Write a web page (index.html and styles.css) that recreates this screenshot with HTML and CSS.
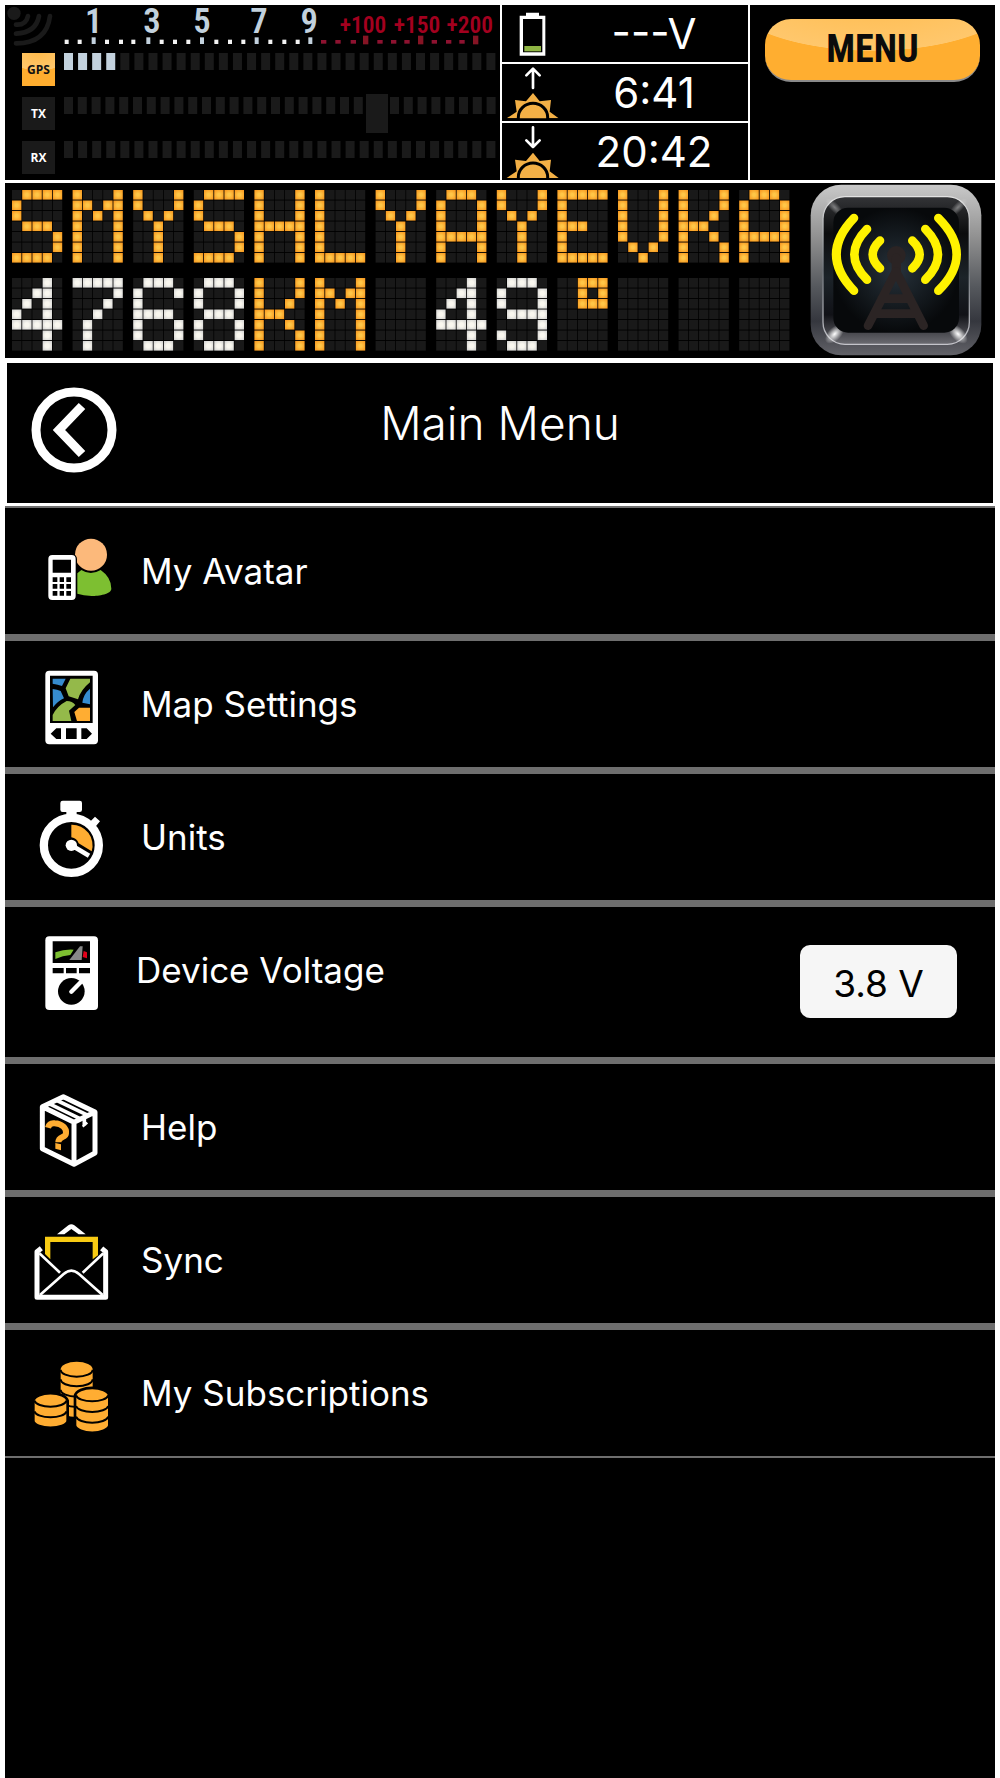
FILE: index.html
```
<!DOCTYPE html>
<html lang="en">
<head>
<meta charset="utf-8">
<meta name="viewport" content="width=device-width, initial-scale=1">
<title>Main Menu</title>
<link rel="stylesheet" href="styles.css">
</head>
<body>
<div class="screen">
  <section class="status">
    <div class="meters">
      <svg class="scale" viewBox="15 15 1485 129" role="img" aria-label="Signal scale">
        <g fill="none" stroke="#1a1a1a" stroke-width="14" stroke-linecap="round">
          <circle cx="42" cy="40" r="20" fill="#1a1a1a" stroke="none"/>
          <path d="M48 74Q78 76 84 48M48 101Q108 98 117 48M48 130Q140 130 150 48"/>
        </g>
        <g class="scale-low">
          <text x="281" y="100">1</text><text x="456" y="100">3</text><text x="606" y="100">5</text><text x="777" y="100">7</text><text x="928" y="100">9</text>
        </g>
        <g class="scale-high">
          <text x="1089" y="98">+100</text><text x="1251" y="98">+150</text><text x="1409" y="98">+200</text>
        </g>
        <g class="ticks"></g>
      </svg>
      <div class="meter"><span class="badge badge-on">GPS</span><svg class="bars" viewBox="0 0 432 39" data-lit="4"></svg></div>
      <div class="meter"><span class="badge">TX</span><svg class="bars" viewBox="0 0 432 39" data-knob="302"></svg></div>
      <div class="meter"><span class="badge">RX</span><svg class="bars" viewBox="0 0 432 39"></svg></div>
    </div>
    <div class="readings">
      <div class="reading">
        <svg class="reading-icon" viewBox="18 15 162 171" aria-hidden="true">
          <path fill="#fff" fill-rule="evenodd" d="M78 38H117V47H136V167H59V47H78ZM69 57V157H127V57Z"/>
          <path fill="#8fb544" d="M73 138H123V154H73Z"/>
        </svg>
        <span class="value">---V</span>
      </div>
      <div class="reading">
        <svg class="reading-icon" viewBox="18 192 162 171" aria-label="Sunrise" role="img">
          <path fill="none" stroke="#fff" stroke-width="8" stroke-linecap="round" stroke-linejoin="round" d="M99 264V207M79 226L99 206L119 226"/>
          <path fill="#f3b046" d="M20 355L50 335L45 300L78 304L99 279L119 304L153 300L149 335L176 355Z"/>
          <path fill="#f3b046" stroke="#000" stroke-width="9" d="M55 360V352A44 42 0 0 1 143 352V360"/>
          <path d="M18 355H180V363H18Z"/>
        </svg>
        <span class="value">6:41</span>
      </div>
      <div class="reading">
        <svg class="reading-icon" viewBox="18 190 162 171" aria-label="Sunset" role="img">
          <path fill="none" stroke="#fff" stroke-width="8" stroke-linecap="round" stroke-linejoin="round" d="M99 203V262M79 242L99 262L119 242"/>
          <path fill="#f3b046" d="M20 355L50 335L45 300L78 304L99 279L119 304L153 300L149 335L176 355Z"/>
          <path fill="#f3b046" stroke="#000" stroke-width="9" d="M55 360V352A44 42 0 0 1 143 352V360"/>
          <path d="M18 355H180V363H18Z"/>
        </svg>
        <span class="value">20:42</span>
      </div>
    </div>
    <div class="menu-cell"><button class="menu-button" type="button">MENU</button></div>
  </section>

  <section class="board">
    <div class="led">
      <svg class="led-line" viewBox="0 0 778 73" role="img" aria-label="SMYSHLYAYEVKA"></svg>
      <svg class="led-line" viewBox="0 0 778 73" role="img" aria-label="4768KM 49°"></svg>
    </div>
    <svg class="antenna" viewBox="30 28 516 516" role="img" aria-label="Transmit">
      <defs>
        <linearGradient id="rim" x1="0" y1="0" x2="0" y2="1"><stop offset="0" stop-color="#c9c9c9"/><stop offset=".3" stop-color="#929292"/><stop offset=".6" stop-color="#55585d"/><stop offset=".8" stop-color="#35373e"/><stop offset="1" stop-color="#626268"/></linearGradient>
        <linearGradient id="bevel" x1="0" y1="0" x2="0" y2="1"><stop offset="0" stop-color="#333437"/><stop offset=".25" stop-color="#0b0c0d"/><stop offset=".55" stop-color="#1c2329"/><stop offset=".8" stop-color="#111217"/><stop offset="1" stop-color="#6c6c72"/></linearGradient>
        <linearGradient id="edge" x1="0" y1="0" x2="0" y2="1"><stop offset="0" stop-color="#e2e2e2"/><stop offset=".5" stop-color="#6f747a"/><stop offset="1" stop-color="#c4c4ca"/></linearGradient>
        <radialGradient id="glass"><stop offset="0" stop-color="#27323b"/><stop offset="1" stop-color="#07090b"/></radialGradient>
        <radialGradient id="glint"><stop offset="0" stop-color="#fff"/><stop offset="1" stop-color="#fff" stop-opacity="0"/></radialGradient>
      </defs>
      <rect x="32" y="30" width="512" height="512" rx="92" fill="url(#rim)"/>
      <rect x="69" y="66" width="439" height="443" rx="66" fill="url(#bevel)" stroke="url(#edge)" stroke-width="4"/>
      <ellipse cx="104" cy="478" rx="36" ry="20" transform="rotate(-45 104 478)" fill="url(#glint)"/>
      <ellipse cx="474" cy="478" rx="36" ry="20" transform="rotate(45 474 478)" fill="url(#glint)"/>
      <ellipse cx="104" cy="98" rx="36" ry="14" transform="rotate(45 104 98)" fill="url(#glint)" opacity=".4"/>
      <ellipse cx="474" cy="98" rx="36" ry="14" transform="rotate(-45 474 98)" fill="url(#glint)" opacity=".4"/>
      <rect x="100" y="99" width="377" height="375" rx="44" fill="url(#glass)"/>
      <g fill="none" stroke="#2b2424" stroke-linecap="round" stroke-linejoin="round">
        <circle cx="289" cy="242" r="28" fill="#2b2424" stroke="none"/>
        <path stroke-width="28" d="M289 250V290"/>
        <path stroke-width="26" d="M204 453L288 290L371 453M245 372H330M228 417H347"/>
      </g>
      <g fill="none" stroke="#fff200" stroke-width="26" stroke-linecap="round">
        <path d="M162 130Q56 240 162 348M201 163Q125 240 201 315M240 198Q196 240 240 281"/>
        <path d="M415 130Q525 240 415 348M376 163Q452 240 376 315M337 198Q381 240 337 281"/>
      </g>
    </svg>
  </section>

  <header class="title-bar">
    <button class="back" type="button" aria-label="Back">
      <svg viewBox="0 0 86 86" aria-hidden="true"><circle cx="43" cy="43" r="38" fill="none" stroke="#fff" stroke-width="9"/><path d="M51 19L28 43L51 67" fill="none" stroke="#fff" stroke-width="9"/></svg>
    </button>
    <h1>Main Menu</h1>
  </header>

  <nav class="menu">
    <a class="row" href="#avatar">
      <svg class="icon" viewBox="33 42 252 240" aria-hidden="true">
        <circle cx="213" cy="104" r="48" fill="#fcb97b"/>
        <path fill="#7dbf31" d="M172 160L184 150Q212 168 242 150Q274 172 274 206C274 222 236 228 215 228Q190 227 172 221Z"/>
        <rect x="81" y="101" width="90" height="143" rx="16"/>
        <rect x="85" y="105" width="82" height="135" rx="12" fill="#fff"/>
        <path d="M98 119H153V158H98ZM98 172H112V186H98ZM119 172H132V186H119ZM139 172H153V186H139ZM98 192H112V206H98ZM119 192H132V206H119ZM139 192H153V206H139ZM98 213H112V227H98ZM119 213H132V227H119ZM139 213H153V227H139Z"/>
      </svg>
      <span class="label">My Avatar</span>
    </a>
    <a class="row" href="#map">
      <svg class="icon" viewBox="33 441 252 240" aria-hidden="true">
        <rect x="76" y="452" width="158" height="221" rx="12" fill="#fff"/>
        <path d="M90 467H218V609H90ZM138 625H170V657H138ZM92 641L109 625H123V657H109ZM216 641L200 625H184V657H200Z"/>
        <path fill="#368ccf" d="M98 476H137L126 498Q114 493 98 491ZM98 507Q112 508 122 513L132 535Q114 543 99 562ZM210 506V553L187 548Q190 522 210 506Z"/>
        <path fill="#94b94a" d="M151 476H210V487Q182 510 174 538L146 529L137 505ZM140 543Q157 543 166 555L147 572L154 603H98V585Q111 558 140 543Z"/>
        <path fill="#ffad32" d="M177 563H210V603H171L163 576Z"/>
      </svg>
      <span class="label">Map Settings</span>
    </a>
    <a class="row" href="#units">
      <svg class="icon" viewBox="33 60 252 240" aria-hidden="true">
        <rect x="121" y="62" width="65" height="34" rx="7" fill="#fff"/>
        <path fill="#fff" d="M139 90H170V110H139ZM210 125L225 110L240 124L225 142Z"/>
        <circle cx="154" cy="196" r="82.500" fill="#000" stroke="#fff" stroke-width="25"/>
        <path fill="#ffad32" d="M154 134A62 62 0 0 1 215 214L176 190Q171 175 154 172Z"/>
        <circle cx="154" cy="196" r="17" fill="#fff"/>
        <path stroke="#fff" stroke-width="14" d="M158 198L207 227"/>
      </svg>
      <span class="label">Units</span>
    </a>
    <div class="row row-field">
      <svg class="icon" viewBox="33 459 252 240" aria-hidden="true">
        <rect x="76" y="469" width="158" height="221" rx="12" fill="#fff"/>
        <path d="M98 484H210V549H98ZM98 564H131V580H98ZM138 564H170V580H138ZM177 564H210V580H177Z"/>
        <path fill="#7dbf31" d="M106 517Q134 507 161 509L151 525Q129 526 106 537Z"/>
        <path fill="#888" d="M148 540L180 499H188L185 540Z"/>
        <path fill="#e2001a" d="M191 513L201 517V535L188 531Z"/>
        <circle cx="154" cy="634" r="40"/>
        <path stroke="#fff" stroke-width="13" stroke-linecap="round" d="M154 635L182 607"/>
        <path fill="#fff" d="M172 594L194 616L202 600L186 588Z"/>
      </svg>
      <label class="label" for="voltage">Device Voltage</label>
      <input class="voltage" id="voltage" type="text" value="3.8 V">
    </div>
    <a class="row" href="#help">
      <svg class="icon" viewBox="33 60 252 240" aria-hidden="true">
        <g fill="none" stroke="#fff" stroke-width="15" stroke-linejoin="round">
          <path d="M67 110L130 80L225 126V249L162 283L67 236ZM67 110L162 157L225 126M162 157V283"/>
          <path stroke-width="11" d="M87 101L180 146M108 90L204 136"/>
          <path stroke-width="11" d="M193 142V166"/>
          <path stroke-width="7" d="M188 170L202 158"/>
        </g>
        <path fill="none" stroke="#ffad32" stroke-width="18" d="M84 173Q88 158 104 160C126 161 140 175 138 190C138 204 115 198 115 217"/>
        <path fill="#ffad32" d="M106 219L123 223V241L106 236Z"/>
      </svg>
      <span class="label">Help</span>
    </a>
    <a class="row" href="#sync">
      <svg class="icon" viewBox="33 459 252 240" aria-hidden="true">
        <path fill="#fff" d="M111 493L145 466Q154 459 163 466L197 493H176L154 477L133 493Z"/>
        <path fill="#f8cb13" d="M75 500H234V556L218 568V516H91V568L75 552Z"/>
        <g fill="none" stroke="#fff">
          <path stroke-width="15" stroke-linejoin="round" d="M64 535L51 545V682H257V545L245 535"/>
          <path stroke-width="8" d="M58 550L120 608M250 550L188 608M60 675L131 612Q154 592 177 612L248 675"/>
        </g>
      </svg>
      <span class="label">Sync</span>
    </a>
    <a class="row" href="#subscriptions">
      <svg class="icon" viewBox="93 138 252 240" aria-hidden="true">
        <g fill="#ffad32">
          <path d="M182 178A48 23 0 0 1 278 178V300A48 21 0 0 1 182 300Z"/>
          <path fill="none" stroke="#000" stroke-width="6" d="M182 179A48 21 0 0 0 278 179M182 208A48 21 0 0 0 278 208M182 239A48 21 0 0 0 278 239M182 270A48 21 0 0 0 278 270"/>
          <path stroke="#000" stroke-width="8" d="M100 272A52 26 0 0 1 203 272V334A52 23 0 0 1 100 334ZM225 256A52 26 0 0 1 328 256V347A52 25 0 0 1 225 347Z"/>
          <path fill="none" stroke="#000" stroke-width="6" d="M103 272A49 21 0 0 0 200 272M103 304A49 21 0 0 0 200 304M228 256A49 21 0 0 0 325 256M228 288A49 21 0 0 0 325 288M228 320A49 21 0 0 0 325 320"/>
        </g>
      </svg>
      <span class="label">My Subscriptions</span>
    </a>
  </nav>
</div>
<script src="script.js"></script>
</body>
</html>
```
FILE: styles.css
```
* { box-sizing: border-box; }

body {
  margin: 0;
  background: #fff;
  color: #fff;
  font-family: Inter, "Liberation Sans", sans-serif;
}

svg { display: block; }

.screen {
  min-height: 100vh;
  border: 5px solid #fff;
  border-bottom: 0;
  background: #000;
}

.status {
  display: grid;
  grid-template-columns: 495fr 246fr 245fr;
  gap: 2px;
  background: #fff;
  border-bottom: 3px solid #fff;
}

.meters {
  display: flex;
  flex-direction: column;
  gap: 11px;
  padding-bottom: 6px;
  background: #000;
}

.scale { width: 100%; margin-bottom: -6px; overflow: visible; }

.scale-low,
.scale-high {
  font-family: "Roboto Condensed", "Liberation Sans Narrow", "Liberation Sans", sans-serif;
  text-anchor: middle;
}

.scale-low { fill: #c2d1dd; font-size: 104px; font-weight: 600; }
.scale-high { fill: #a3001f; font-size: 70px; font-weight: 600; }

.meter {
  display: flex;
  gap: 9px;
  height: 33px;
  padding: 0 4px 0 17px;
}

.badge {
  width: 33px;
  background: #1a1a1a;
  font: 700 12px/33px "Open Sans", sans-serif;
  text-align: center;
}

.badge-on {
  background: radial-gradient(ellipse 30px 18px at 50% 0, #ffbb4c 0, #ffc76c 97%, #ffad2f 100%);
  color: #111;
}

.bars { flex: 1; height: 39px; overflow: visible; margin-top: -3px; }

.readings {
  display: grid;
  grid-template-rows: repeat(3, 1fr);
  gap: 2px;
}

.reading {
  display: flex;
  align-items: center;
  padding-left: 4px;
  background: #000;
}

.reading-icon { width: 54px; height: 57px; }

.value {
  flex: 1;
  font-size: 42px;
  font-weight: 400;
  line-height: 56px;
  text-align: center;
}

.menu-cell { padding: 14px 15px; background: #000; }

.menu-button {
  display: block;
  width: 100%;
  height: 63px;
  padding: 0;
  border: 0;
  border-bottom: 2px solid #8a8a8a;
  border-radius: 26px;
  background: radial-gradient(ellipse 150px 60px at 50% -28px, #ffbb4c 0, #ffc76c 99%, #ffae30 100%);
  color: #0b0b0b;
  font: 700 38px/61px "Roboto Condensed", "Liberation Sans Narrow", "Liberation Sans", sans-serif;
}

.board {
  display: flex;
  align-items: center;
  justify-content: space-between;
  gap: 20px;
  padding: 1px 13px 2px 7px;
  background: #000;
}

.led {
  flex: 1;
  display: grid;
  gap: 15px;
}

.led-line { width: 100%; }

.antenna { width: 172px; height: 172px; }

.title-bar {
  display: grid;
  grid-template-columns: 120px 1fr 120px;
  align-items: start;
  min-height: 148px;
  padding-top: 24px;
  border: solid #fff;
  border-width: 5px 2px 3px;
}

.back {
  justify-self: start;
  width: 86px;
  margin-left: 24px;
  padding: 0;
  border: 0;
  background: none;
}

h1 {
  margin: 0;
  padding-top: 8px;
  font-size: 46px;
  font-weight: 300;
  line-height: 56px;
  text-align: center;
}

.menu {
  border-top: 2px solid #6e6e6e;
  border-bottom: 2px solid #6e6e6e;
}

.row {
  display: flex;
  align-items: flex-start;
  gap: 26px;
  min-height: 126px;
  padding: 0 38px 0 26px;
  color: #fff;
  text-decoration: none;
}

.row + .row { border-top: 7px solid #6e6e6e; min-height: 133px; }

.row + .row-field { gap: 21px; min-height: 157px; }

.icon { width: 84px; height: 80px; margin-top: 26px; }

.label {
  flex: 1;
  font-size: 35px;
  font-weight: 400;
  line-height: 126px;
}

.voltage {
  width: 157px;
  height: 73px;
  margin-top: 38px;
  padding: 4px 0 0;
  border: 0;
  border-radius: 10px;
  background: #f6f6f6;
  color: #000;
  font: 400 37px/69px Inter, sans-serif;
  text-align: center;
}
```
FILE: script.js
```
const NS = "http://www.w3.org/2000/svg";

function rect(parent, x, y, width, height, fill) {
  const el = document.createElementNS(NS, "rect");
  Object.entries({ x, y, width, height, fill }).forEach(([k, v]) => el.setAttribute(k, v));
  parent.appendChild(el);
}

// Dots and ticks under the signal scale
const ticks = document.querySelector(".ticks");
[200, 239, 321, 363, 400, 485, 525, 565, 649, 690, 730, 811, 853, 893].forEach(x => rect(ticks, x - 6, 119, 12, 13, "#f2f2f2"));
[281, 445, 606, 770, 931].forEach(x => rect(ticks, x - 6, 112, 12, 20, "#c2d1dd"));
[971, 1014, 1060, 1140, 1181, 1221, 1303, 1346, 1386].forEach(x => rect(ticks, x - 8, 120, 16, 11, "#8e1230"));
[1097, 1262, 1427].forEach(x => rect(ticks, x - 8, 107, 16, 26, "#861424"));

// Segment bars
document.querySelectorAll(".bars").forEach(svg => {
  const lit = Number(svg.dataset.lit || 0);
  const knob = Number(svg.dataset.knob || 0);
  if (knob) {
    for (let i = 0; i < 22; i++) rect(svg, i * 13.8, 3, 9, 17, "#1a1a1a");
    for (let i = 0; i < 8; i++) rect(svg, 326 + i * 13.8, 3, 9, 17, "#1a1a1a");
    rect(svg, knob, 0, 22, 39, "#1a1a1a");
  } else {
    for (let i = 0; i < 31; i++) rect(svg, i * 14.08, 3, 9, 17, i < lit ? "#c2d1dd" : "#1a1a1a");
  }
});

// Dot-matrix display: seven rows of five cells for each character
const CELLS = {
  S: "01111 10000 10000 01110 00001 00001 11110",
  M: "10001 11011 10101 10001 10001 10001 10001",
  Y: "10001 10001 01010 00100 00100 00100 00100",
  H: "10001 10001 10001 11111 10001 10001 10001",
  L: "10000 10000 10000 10000 10000 10000 11111",
  A: "01110 10001 10001 10001 11111 10001 10001",
  E: "11111 10000 10000 11100 10000 10000 11111",
  V: "10001 10001 10001 10001 10001 01010 00100",
  K: "10001 10001 10010 11100 10010 10001 10001",
  4: "00010 00110 01010 10010 11111 00010 00010",
  6: "01110 10001 10000 11110 10001 10001 01110",
  7: "11111 00001 00010 00100 01000 01000 01000",
  8: "01110 10001 10001 01110 10001 10001 01110",
  9: "01110 10001 10001 01111 00001 10001 01110",
  "°": "00111 00101 00111 00000 00000 00000 00000"
};

document.querySelectorAll(".led-line").forEach(svg => {
  svg.innerHTML = '<defs><radialGradient id="amber" r=".7"><stop offset=".2" stop-color="#ffc647"/><stop offset="1" stop-color="#f7921a"/></radialGradient>' +
    '<radialGradient id="white" r=".7"><stop offset=".3" stop-color="#f9f7ef"/><stop offset="1" stop-color="#cfcfcf"/></radialGradient></defs>';
  const text = svg.getAttribute("aria-label").padEnd(13, " ");
  [...text].forEach((ch, n) => {
    const rows = (CELLS[ch] || "00000 00000 00000 00000 00000 00000 00000").split(" ");
    const on = /\d/.test(ch) ? "url(#white)" : "url(#amber)";
    rows.forEach((bits, r) => [...bits].forEach((bit, c) =>
      rect(svg, n * 60.6 + c * 10.2, r * 10.5, 9.4, 9.6, bit === "1" ? on : "#191919")));
  });
});
```
